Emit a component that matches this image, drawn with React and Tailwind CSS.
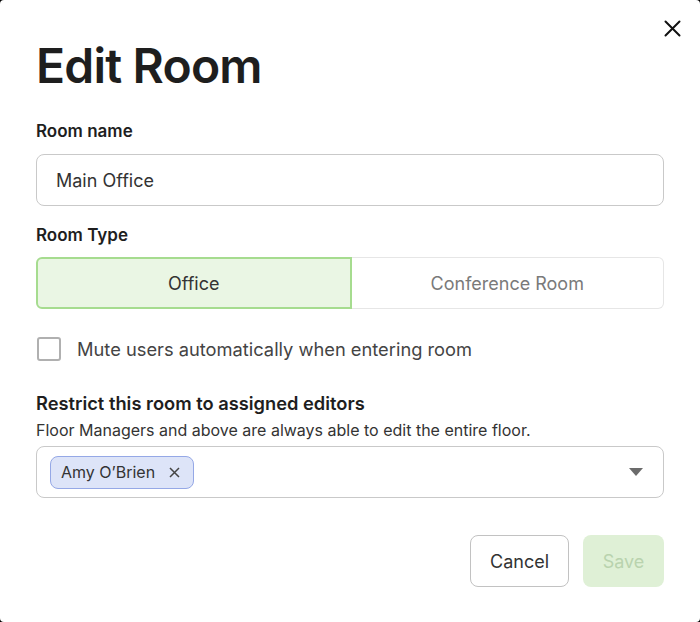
import React, { useState } from "react";

const App = () => {
  const [roomName, setRoomName] = useState("Main Office");
  const [roomType, setRoomType] = useState("office");
  const [muted, setMuted] = useState(false);
  const [editors, setEditors] = useState(["Amy O’Brien"]);

  return (
    <div className="bg-black w-[700px] h-[622px]" style={{ fontFamily: "Inter, 'Noto Sans', sans-serif" }}>
      <div className="relative bg-white w-[700px] h-[622px] rounded-[4px] px-[36px] pt-[40px] text-[#2b2b2b]">
        <button className="absolute right-[19px] top-[19px] w-[18px] h-[18px] flex items-center justify-center">
          <svg width="17" height="17" viewBox="0 0 17 17">
            <path d="M1.5 1.5 L15.5 15.5 M15.5 1.5 L1.5 15.5" stroke="#111" strokeWidth="2" strokeLinecap="round" />
          </svg>
        </button>

        <h1 className="text-[48px] leading-[52px] font-semibold tracking-[-0.8px] text-[#1e1e1e]">Edit Room</h1>

        <label className="block mt-[27px] text-[17px] leading-[24px] font-semibold text-[#1e1e1e]">Room name</label>
        <input
          className="mt-[11px] w-full h-[52px] rounded-[8px] border border-[#c9c9c9] px-[19px] text-[18px] text-[#333] outline-none"
          value={roomName}
          onChange={(e) => setRoomName(e.target.value)}
        />

        <div className="mt-[17px] text-[17px] leading-[24px] font-semibold text-[#1e1e1e]">Room Type</div>
        <div className="mt-[10px] flex h-[52px]">
          <button
            onClick={() => setRoomType("office")}
            className={
              roomType === "office"
                ? "flex-1 rounded-l-[6px] border-2 border-[#a6dc8f] bg-[#eaf6e4] text-[18px] text-[#333]"
                : "flex-1 rounded-l-[6px] border border-[#e6e6e6] bg-white text-[18px] text-[#7a7a7a]"
            }
          >
            Office
          </button>
          <button
            onClick={() => setRoomType("conference")}
            className={
              roomType === "conference"
                ? "flex-1 rounded-r-[6px] border-2 border-[#a6dc8f] bg-[#eaf6e4] text-[18px] text-[#333]"
                : "flex-1 rounded-r-[6px] border border-l-0 border-[#e6e6e6] bg-white text-[18px] text-[#7a7a7a]"
            }
          >
            Conference Room
          </button>
        </div>

        <label className="mt-[27px] flex items-center gap-[16px] cursor-pointer">
          <span
            onClick={() => setMuted(!muted)}
            className="w-[24px] h-[24px] ml-[1px] rounded-[3px] border-2 border-[#b0b0b0] bg-white flex items-center justify-center"
          >
            {muted && <span className="text-[14px] text-[#333]">✓</span>}
          </span>
          <span className="text-[18.3px] leading-[26px] text-[#444]">Mute users automatically when entering room</span>
        </label>

        <div className="mt-[29px] text-[18.3px] leading-[24px] font-semibold text-[#1e1e1e]">
          Restrict this room to assigned editors
        </div>
        <div className="mt-[5px] text-[16px] leading-[20px] text-[#333]">
          Floor Managers and above are always able to edit the entire floor.
        </div>
        <div className="mt-[6px] h-[52px] rounded-[8px] border border-[#c9c9c9] flex items-center pl-[13px] pr-[20px]">
          <div className="flex-1 flex items-center gap-2">
            {editors.map((name) => (
              <span
                key={name}
                className="h-[33px] flex items-center gap-[14px] rounded-[8px] border border-[#95a8e6] bg-[#dde4f8] pl-[10px] pr-[13px] text-[16px] text-[#333]"
              >
                {name}
                <svg
                  width="11"
                  height="11"
                  viewBox="0 0 11 11"
                  onClick={() => setEditors(editors.filter((n) => n !== name))}
                >
                  <path d="M1 1 L10 10 M10 1 L1 10" stroke="#444" strokeWidth="1.5" />
                </svg>
              </span>
            ))}
          </div>
          <svg width="14" height="8" viewBox="0 0 14 8">
            <path d="M0 0 L14 0 L7 8 Z" fill="#6b6b6b" />
          </svg>
        </div>

        <div className="mt-[37px] flex justify-end gap-[14px]">
          <button className="h-[52px] w-[99px] rounded-[8px] border border-[#c2c2c2] bg-white text-[18px] text-[#333]">
            Cancel
          </button>
          <button className="h-[52px] w-[81px] rounded-[8px] bg-[#dff0d6] text-[18px] text-[#b9d3ae]" disabled>
            Save
          </button>
        </div>
      </div>
    </div>
  );
};

export default App;
